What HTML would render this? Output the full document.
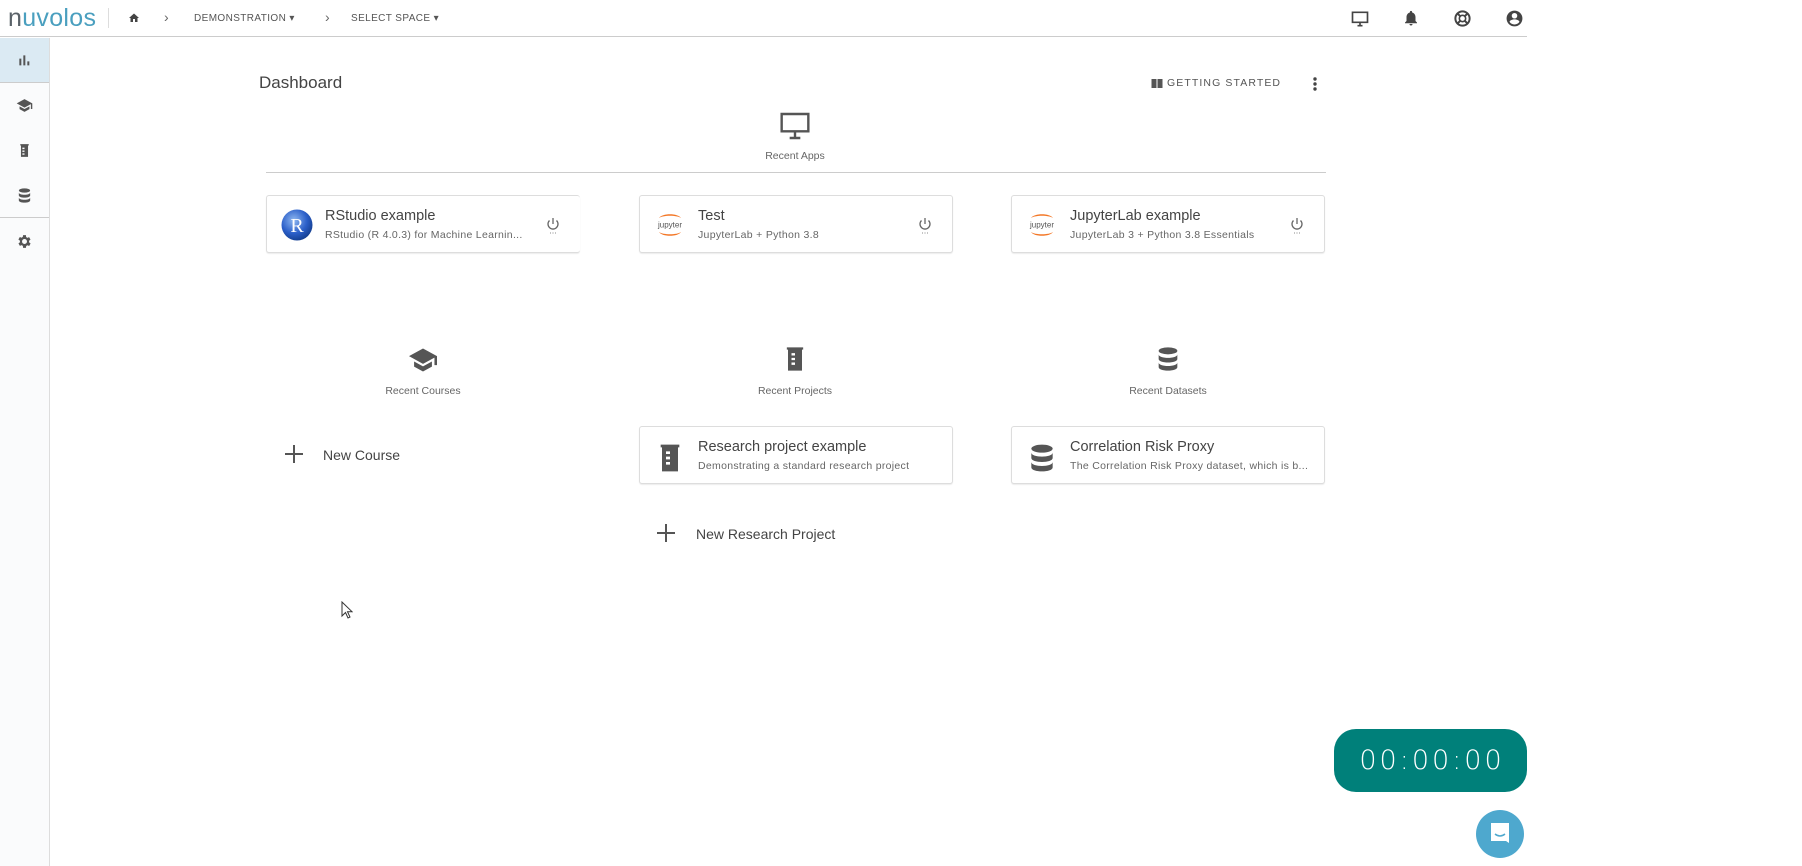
<!DOCTYPE html>
<html><head><meta charset="utf-8"><style>
*{box-sizing:border-box;margin:0;padding:0}
body{width:1802px;height:866px;background:#fff;font-family:"Liberation Sans",sans-serif;color:#555;position:relative;overflow:hidden}
.a{position:absolute}
.card{position:absolute;height:58px;width:314px;border:1px solid #ddd;border-radius:3px;box-shadow:0 1px 1px rgba(0,0,0,.08);background:#fff}
.card .t{position:absolute;left:58px;top:12px;font-size:14.5px;color:#444}
.card .s{position:absolute;left:58px;top:33px;font-size:10.5px;color:#666;letter-spacing:.3px;white-space:nowrap}
.card .ic{position:absolute;left:14px;top:13px;width:32px;height:32px}
.pw{position:absolute;right:20px;top:21px}
.lbl{position:absolute;font-size:10.5px;color:#666;transform:translateX(-50%);white-space:nowrap}
.sb svg{position:absolute;left:16px}
#m{position:absolute;left:-4px;top:-1px;width:1802px;height:866px}
</style></head><body>
<!-- header -->
<div class="a" style="left:0;top:0;width:1527px;height:37px;border-bottom:1px solid #ccc"></div>
<div class="a" style="left:8px;top:4px;font-size:25px;color:#4a9fbf;letter-spacing:.3px"><span style="color:#5a6268">n</span>uvolos</div>
<div class="a" style="left:108px;top:8px;width:1px;height:20px;background:#ddd"></div>
<svg class="a" style="left:128px;top:12px" width="12" height="12" viewBox="0 0 24 24"><path d="M10 20v-6h4v6h5v-8h3L12 3 2 12h3v8z" fill="#444"/></svg>
<div class="a" style="left:164px;top:9px;font-size:14px;color:#666">›</div>
<div class="a" style="left:194px;top:13px;font-size:10px;color:#555;letter-spacing:.4px">DEMONSTRATION ▾</div>
<div class="a" style="left:325px;top:9px;font-size:14px;color:#666">›</div>
<div class="a" style="left:351px;top:13px;font-size:10px;color:#555;letter-spacing:.4px">SELECT SPACE ▾</div>
<svg class="a" style="left:1350px;top:9px" width="20" height="20" viewBox="0 0 24 24"><path d="M3 4h18v12H3z M9 20h6 M12 16v4" stroke="#444" stroke-width="2" fill="none"/></svg>
<svg class="a" style="left:1402px;top:9px" width="18" height="18" viewBox="0 0 24 24"><path d="M12 22a2 2 0 0 0 2-2h-4a2 2 0 0 0 2 2zm6-6V11c0-3-1.6-5.6-4.5-6.3V4a1.5 1.5 0 0 0-3 0v.7C7.6 5.4 6 8 6 11v5l-2 2v1h16v-1z" fill="#444"/></svg>
<svg class="a" style="left:1453px;top:9px" width="19" height="19" viewBox="0 0 24 24"><circle cx="12" cy="12" r="9" stroke="#444" stroke-width="2.5" fill="none"/><circle cx="12" cy="12" r="4" stroke="#444" stroke-width="2" fill="none"/><path d="M5 5l4 4M19 5l-4 4M5 19l4-4M19 19l-4-4" stroke="#444" stroke-width="2.5"/></svg>
<svg class="a" style="left:1505px;top:9px" width="19" height="19" viewBox="0 0 24 24"><path d="M12 2a10 10 0 1 0 0 20 10 10 0 0 0 0-20zm0 3a3.5 3.5 0 1 1 0 7 3.5 3.5 0 0 1 0-7zm0 14.5c-2.6 0-4.9-1.3-6.2-3.3 0-2 4.1-3.1 6.2-3.1s6.2 1.1 6.2 3.1c-1.3 2-3.6 3.3-6.2 3.3z" fill="#444"/></svg>
<!-- sidebar -->
<div class="a sb" style="left:0;top:38px;width:50px;height:828px;border-right:1px solid #ddd;background:#fafbfc">
<div class="a" style="left:0;top:0;width:49px;height:45px;background:#dbeaf3;border-bottom:1px solid #ccc"></div>
<svg style="top:14px" width="16" height="16" viewBox="0 0 24 24"><path d="M5 10h3v10H5zM11 5h3v15h-3zM17 14h3v6h-3z" fill="#555"/></svg>
<div class="a" style="left:0;top:179px;width:49px;height:1px;background:#ccc"></div>
<svg style="top:59px" width="17" height="17" viewBox="0 0 24 24"><path d="M12 3L1 9l11 6 9-4.9V17h2V9zM5 13.2v4L12 21l7-3.8v-4L12 17z" fill="#555"/></svg>
<svg style="top:104px" width="17" height="17" viewBox="0 0 24 24"><path d="M6 3h12v2h-1v16H7V5H6zM9 8v2h3V8zm0 4v2h3v-2zm0 4v2h3v-2z" fill="#555"/></svg>
<svg style="top:149px" width="17" height="17" viewBox="0 0 24 24"><ellipse cx="12" cy="5" rx="8" ry="3" fill="#555"/><path d="M4 8c0 2 4 3 8 3s8-1 8-3v4c0 2-4 3-8 3s-8-1-8-3zM4 15c0 2 4 3 8 3s8-1 8-3v4c0 2-4 3-8 3s-8-1-8-3z" fill="#555"/></svg>
<svg style="top:195px" width="17" height="17" viewBox="0 0 24 24"><path d="M19.4 13a7.5 7.5 0 0 0 0-2l2.1-1.6-2-3.5-2.5 1a7 7 0 0 0-1.7-1L15 3h-4l-.4 2.7a7 7 0 0 0-1.7 1l-2.5-1-2 3.5L6.6 11a7.5 7.5 0 0 0 0 2l-2.1 1.6 2 3.5 2.5-1a7 7 0 0 0 1.7 1L11 21h4l.4-2.7a7 7 0 0 0 1.7-1l2.5 1 2-3.5zM13 15.5a3.5 3.5 0 1 1 0-7 3.5 3.5 0 0 1 0 7z" fill="#555" transform="translate(-1 0)"/></svg>
</div>
<div id="m">
<div class="a" style="left:263px;top:74px;font-size:17px;color:#444">Dashboard</div>
<svg class="a" style="left:1155px;top:79px" width="12" height="11" viewBox="0 0 24 22"><path d="M1 2h10v18H1zM13 2h10v18H13z" fill="#555"/></svg>
<div class="a" style="left:1171px;top:78px;font-size:10.5px;color:#555;letter-spacing:1.1px">GETTING STARTED</div>
<svg class="a" style="left:1316px;top:77px" width="6" height="16" viewBox="0 0 6 16"><circle cx="3" cy="3" r="1.7" fill="#444"/><circle cx="3" cy="8" r="1.7" fill="#444"/><circle cx="3" cy="13" r="1.7" fill="#444"/></svg>
<svg class="a" style="left:783px;top:112px" width="32" height="30" viewBox="0 0 24 22"><path d="M2 2h20v13H2z M8 20h8 M12 15v5" stroke="#555" stroke-width="1.8" fill="none"/></svg>
<div class="lbl" style="left:799px;top:151px">Recent Apps</div>
<div class="a" style="left:270px;top:173px;width:1060px;height:1px;background:#ccc"></div>

<div class="card" style="left:270px;top:196px;width:314px;border-right:none">
<svg class="ic" viewBox="0 0 32 32"><defs><radialGradient id="g" cx=".4" cy=".35" r=".7"><stop offset="0" stop-color="#8fb8f0"/><stop offset=".6" stop-color="#2b5fc9"/><stop offset="1" stop-color="#123b8a"/></radialGradient></defs><circle cx="16" cy="16" r="15.5" fill="url(#g)"/><text x="16" y="23" font-size="20" font-family="Liberation Serif" text-anchor="middle" fill="#fff">R</text></svg>
<div class="t">RStudio example</div><div class="s">RStudio (R 4.0.3) for Machine Learnin...</div>
<svg class="pw" width="14" height="18" viewBox="0 0 14 18"><path d="M7 1v6M3.5 3.5a5 5 0 1 0 7 0" stroke="#666" stroke-width="1.3" fill="none"/><path d="M4 16h1M6.5 16h1M9 16h1" stroke="#888"/></svg></div>
<div class="card" style="left:643px;top:196px">
<svg class="ic" viewBox="0 0 32 32"><path d="M5 9c3-5 19-5 22 0c-4-3-18-3-22 0zM5 23c3 5 19 5 22 0c-4 3-18 3-22 0z" fill="#f37726"/><text x="16" y="18.5" font-size="8" text-anchor="middle" fill="#555" font-family="Liberation Sans">jupyter</text></svg>
<div class="t">Test</div><div class="s">JupyterLab + Python 3.8</div>
<svg class="pw" width="14" height="18" viewBox="0 0 14 18"><path d="M7 1v6M3.5 3.5a5 5 0 1 0 7 0" stroke="#666" stroke-width="1.3" fill="none"/><path d="M4 16h1M6.5 16h1M9 16h1" stroke="#888"/></svg></div>
<div class="card" style="left:1015px;top:196px">
<svg class="ic" viewBox="0 0 32 32"><path d="M5 9c3-5 19-5 22 0c-4-3-18-3-22 0zM5 23c3 5 19 5 22 0c-4 3-18 3-22 0z" fill="#f37726"/><text x="16" y="18.5" font-size="8" text-anchor="middle" fill="#555" font-family="Liberation Sans">jupyter</text></svg>
<div class="t">JupyterLab example</div><div class="s">JupyterLab 3 + Python 3.8 Essentials</div>
<svg class="pw" width="14" height="18" viewBox="0 0 14 18"><path d="M7 1v6M3.5 3.5a5 5 0 1 0 7 0" stroke="#666" stroke-width="1.3" fill="none"/><path d="M4 16h1M6.5 16h1M9 16h1" stroke="#888"/></svg></div>

<svg class="a" style="left:411px;top:347px" width="32" height="28" viewBox="0 0 24 22"><path d="M12 2L1 8l11 6 9-4.9V15h2V8zM5 12.2v4L12 20l7-3.8v-4L12 16z" fill="#555"/></svg>
<div class="lbl" style="left:427px;top:386px">Recent Courses</div>
<svg class="a" style="left:785px;top:345px" width="28" height="30" viewBox="0 0 24 24"><path d="M5 2h14v2h-1v18H6V4H5zM9 7v2h3V7zm0 4v2h3v-2zm0 4v2h3v-2z" fill="#555"/></svg>
<div class="lbl" style="left:799px;top:386px">Recent Projects</div>
<svg class="a" style="left:1158px;top:345px" width="28" height="30" viewBox="0 0 24 24"><ellipse cx="12" cy="5" rx="8" ry="3" fill="#555"/><path d="M4 8c0 2 4 3 8 3s8-1 8-3v4c0 2-4 3-8 3s-8-1-8-3zM4 15c0 2 4 3 8 3s8-1 8-3v4c0 2-4 3-8 3s-8-1-8-3z" fill="#555"/></svg>
<div class="lbl" style="left:1172px;top:386px">Recent Datasets</div>

<svg class="a" style="left:288px;top:445px" width="20" height="20" viewBox="0 0 20 20"><path d="M10 1v18M1 10h18" stroke="#555" stroke-width="2"/></svg>
<div class="a" style="left:327px;top:448px;font-size:14px;color:#444">New Course</div>

<div class="card" style="left:643px;top:427px">
<svg class="ic" style="top:15px" viewBox="0 0 24 24"><path d="M5 2h14v2h-1v18H6V4H5zM9 7v2h3V7zm0 4v2h3v-2zm0 4v2h3v-2z" fill="#555"/></svg>
<div class="t">Research project example</div><div class="s">Demonstrating a standard research project</div></div>
<div class="card" style="left:1015px;top:427px">
<svg class="ic" style="top:15px" viewBox="0 0 24 24"><ellipse cx="12" cy="5" rx="8" ry="3" fill="#555"/><path d="M4 8c0 2 4 3 8 3s8-1 8-3v4c0 2-4 3-8 3s-8-1-8-3zM4 15c0 2 4 3 8 3s8-1 8-3v4c0 2-4 3-8 3s-8-1-8-3z" fill="#555"/></svg>
<div class="t">Correlation Risk Proxy</div><div class="s">The Correlation Risk Proxy dataset, which is b...</div></div>

<svg class="a" style="left:660px;top:524px" width="20" height="20" viewBox="0 0 20 20"><path d="M10 1v18M1 10h18" stroke="#555" stroke-width="2"/></svg>
<div class="a" style="left:700px;top:527px;font-size:14px;color:#444">New Research Project</div>
</div>
<svg class="a" style="left:341px;top:601px" width="12" height="18" viewBox="0 0 12 18"><path d="M1 1v14l3.5-3.5 2.5 5.5 2-1-2.5-5.3H11z" fill="#fff" stroke="#333" stroke-width="1"/></svg>

<div class="a" style="left:1334px;top:729px;width:193px;height:63px;border-radius:22px;background:#00807a;color:#fff;font-size:27px;letter-spacing:3px;text-align:center;line-height:63px;font-family:'DejaVu Sans',sans-serif;font-weight:300;padding-left:3px">00:00:00</div>
<div class="a" style="left:1476px;top:810px;width:48px;height:48px;border-radius:50%;background:#4ea8ce"></div>
<svg class="a" style="left:1488px;top:821px" width="24" height="26" viewBox="0 0 24 26"><path d="M3 2h18v20l-3-2H3z" fill="#fff"/><path d="M7 13q5 4 10 0" stroke="#4ea8ce" stroke-width="1.5" fill="none"/></svg>
</body></html>
